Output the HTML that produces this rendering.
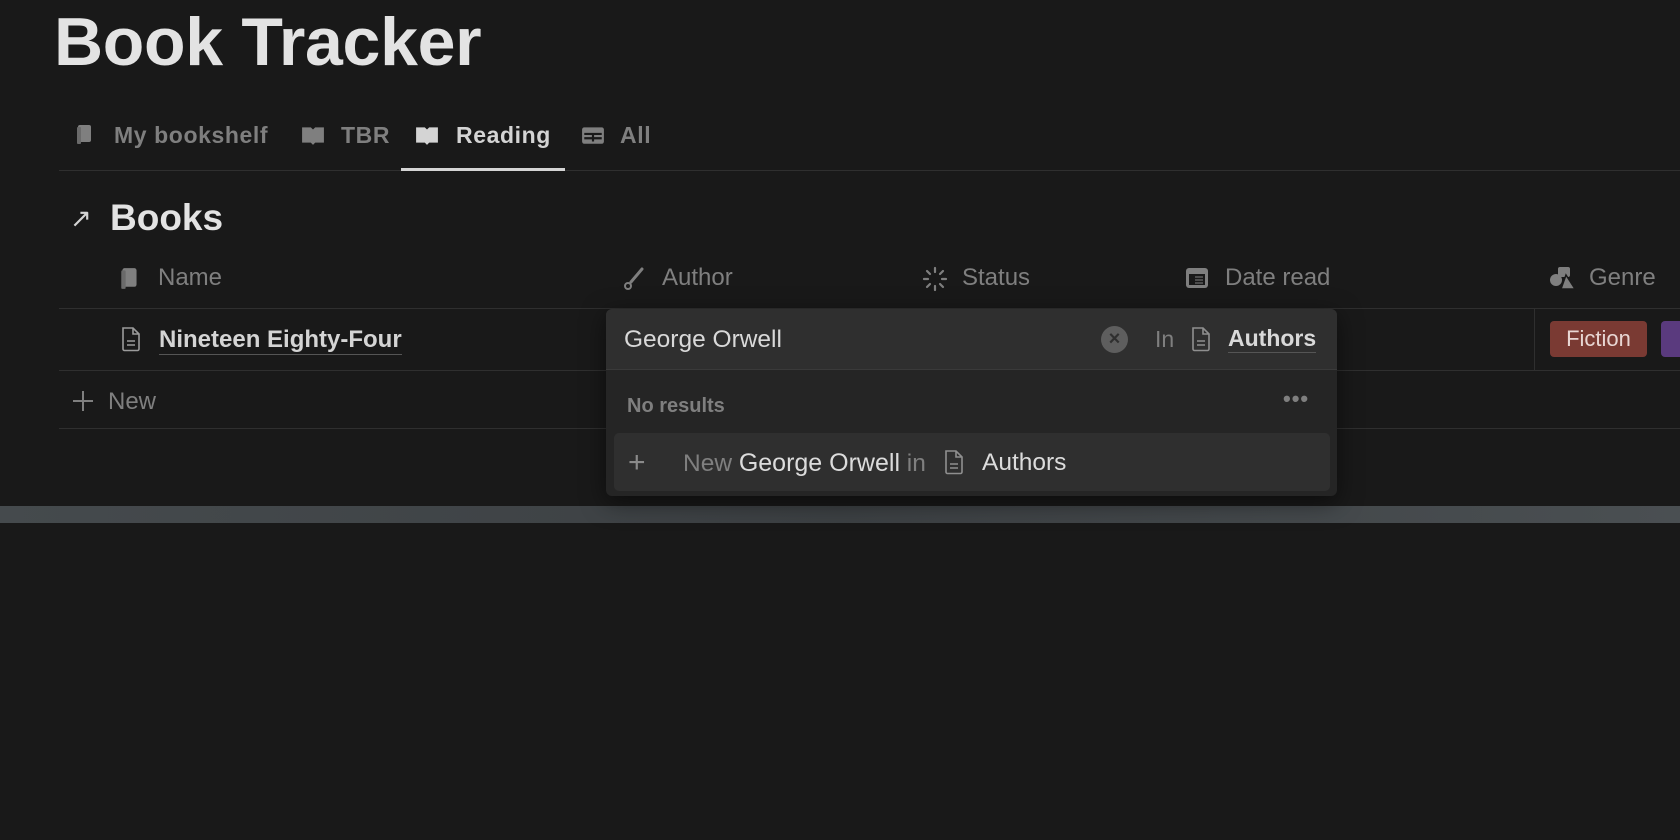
<!DOCTYPE html>
<html><head><style>
*{margin:0;padding:0;box-sizing:border-box}
body{width:1680px;height:840px;background:#191919;font-family:"Liberation Sans",sans-serif;color:#d4d4d4;position:relative;overflow:hidden}
.a{position:absolute;white-space:nowrap}
.m{color:#7f7f7f}
svg{display:block}
</style></head><body>
<div class="a" style="left:54px;top:8px;font-size:68px;line-height:1;font-weight:bold;color:#e3e3e3;letter-spacing:-0.3px">Book Tracker</div>

<div class="a m" style="left:0;top:122px;font-size:23px;font-weight:bold;width:800px;height:30px;letter-spacing:0.6px">
 <svg class="a" style="left:75px;top:0" width="20" height="24" viewBox="0 0 20 22"><rect x="3" y="2" width="13" height="17" rx="2" fill="#7f7f7f"/><rect x="2" y="4" width="4" height="17" rx="1" fill="#6a6a6a"/></svg>
 <span class="a" style="left:114px;top:0">My bookshelf</span>
 <svg class="a" style="left:301px;top:2px" width="24" height="22" viewBox="0 0 22 20"><path d="M1 3h8l2 2v14l-2-2H1z M21 3h-8l-2 2v14l2-2h8z" fill="#7f7f7f"/></svg>
 <span class="a" style="left:341px;top:0">TBR</span>
 <svg class="a" style="left:415px;top:2px" width="24" height="22" viewBox="0 0 22 20"><path d="M1 3h8l2 2v14l-2-2H1z M21 3h-8l-2 2v14l2-2h8z" fill="#d4d4d4"/></svg>
 <span class="a" style="left:456px;top:0;color:#d4d4d4">Reading</span>
 <svg class="a" style="left:581px;top:2px" width="24" height="22" viewBox="0 0 22 20"><rect x="1" y="3" width="20" height="15" rx="2" fill="#7f7f7f"/><path d="M3 9h16M11 9v7M3 13h16" stroke="#191919" stroke-width="2"/></svg>
 <span class="a" style="left:620px;top:0">All</span>
</div>
<div class="a" style="left:59px;top:170px;width:1621px;height:1px;background:#2f2f2f"></div>
<div class="a" style="left:401px;top:168px;width:164px;height:3px;background:#d4d4d4"></div>

<div class="a" style="left:70px;top:203px;font-size:26px;color:#d4d4d4">↗</div>
<div class="a" style="left:110px;top:197px;font-size:37px;font-weight:bold;color:#e3e3e3">Books</div>

<div class="a m" style="top:264px;left:0;font-size:24px;width:1680px;height:28px">
 <svg class="a" style="left:119px;top:2px" width="22" height="24" viewBox="0 0 20 22"><rect x="3" y="2" width="13" height="17" rx="2" fill="#7f7f7f"/><rect x="2" y="4" width="4" height="17" rx="1" fill="#6a6a6a"/></svg>
 <span class="a" style="left:158px;top:0">Name</span>
 <svg class="a" style="left:622px;top:3px" width="24" height="24" viewBox="0 0 24 24"><path d="M20 2L9 15" stroke="#7f7f7f" stroke-width="3" stroke-linecap="round"/><circle cx="6" cy="19" r="3" fill="none" stroke="#7f7f7f" stroke-width="2"/></svg>
 <span class="a" style="left:662px;top:0">Author</span>
 <svg class="a" style="left:922px;top:2px" width="26" height="26" viewBox="0 0 26 26"><g stroke="#7f7f7f" stroke-width="2.2" stroke-linecap="round"><path d="M13 2v4M13 20v4M2 13h4M20 13h4M5 5l3 3M18 18l3 3M21 5l-3 3M8 18l-3 3"/></g></svg>
 <span class="a" style="left:962px;top:0">Status</span>
 <svg class="a" style="left:1185px;top:3px" width="24" height="22" viewBox="0 0 24 22"><rect x="1" y="1" width="22" height="20" rx="3" fill="#7f7f7f"/><rect x="4" y="7" width="16" height="11" fill="#191919"/><path d="M10 10h8M10 13h8M10 16h8" stroke="#7f7f7f" stroke-width="1"/></svg>
 <span class="a" style="left:1225px;top:0">Date read</span>
 <svg class="a" style="left:1549px;top:2px" width="28" height="24" viewBox="0 0 28 24"><rect x="9" y="1" width="12" height="10" rx="2" fill="#7f7f7f"/><circle cx="7" cy="14" r="6" fill="#7f7f7f"/><path d="M17 9l9 14h-14z" fill="#7f7f7f" stroke="#191919" stroke-width="1.5"/></svg>
 <span class="a" style="left:1589px;top:0">Genre</span>
</div>

<div class="a" style="left:59px;top:308px;width:1621px;height:1px;background:#2f2f2f"></div>
<div class="a" style="left:59px;top:370px;width:1621px;height:1px;background:#2f2f2f"></div>
<div class="a" style="left:59px;top:428px;width:1621px;height:1px;background:#2f2f2f"></div>
<div class="a" style="left:1534px;top:309px;width:1px;height:61px;background:#2f2f2f"></div>

<svg class="a" style="left:120px;top:326px" width="22" height="26" viewBox="0 0 22 26"><path d="M3 2h10l6 6v15a1.5 1.5 0 0 1-1.5 1.5h-13A1.5 1.5 0 0 1 3 23z M13 2v6h6 M7 15h8M7 19h8" fill="none" stroke="#9b9b9b" stroke-width="1.6"/></svg>
<div class="a" style="left:159px;top:326px;font-size:24px;font-weight:bold;color:#d4d4d4;border-bottom:1px solid #555;line-height:28px">Nineteen Eighty-Four</div>

<svg class="a" style="left:72px;top:390px" width="22" height="22" viewBox="0 0 22 22"><path d="M11 1v20M1 11h20" stroke="#7f7f7f" stroke-width="2"/></svg>
<div class="a m" style="left:108px;top:388px;font-size:24px">New</div>

<div class="a" style="left:1550px;top:321px;width:97px;height:36px;background:#7a3a33;border-radius:4px;color:#e8d6d3;font-size:22px;line-height:36px;text-align:center">Fiction</div>
<div class="a" style="left:1661px;top:321px;width:30px;height:36px;background:#5a3a7e;border-radius:4px"></div>

<div class="a" style="left:0;top:506px;width:1680px;height:17px;background:linear-gradient(90deg,#454a4d,#3c4043 50%,#4a4f52)"></div>

<div class="a" style="left:606px;top:309px;width:731px;height:187px;background:#252525;border-radius:6px;box-shadow:0 6px 24px rgba(0,0,0,.5)">
 <div class="a" style="left:0;top:0;width:731px;height:61px;background:#2f2f2f;border-radius:6px 6px 0 0;border-bottom:1px solid #3a3a3a"></div>
 <div class="a" style="left:18px;top:17px;font-size:24.5px;color:#d9d9d9">George Orwell</div>
 <div class="a" style="left:495px;top:17px;width:27px;height:27px;border-radius:50%;background:#5e5e5e;color:#2f2f2f;font-size:20px;line-height:27px;text-align:center;font-weight:bold">×</div>
 <div class="a m" style="left:549px;top:17px;font-size:23px">In</div>
 <svg class="a" style="left:584px;top:16px" width="22" height="28" viewBox="0 0 22 26"><path d="M3 2h10l6 6v15a1.5 1.5 0 0 1-1.5 1.5h-13A1.5 1.5 0 0 1 3 23z M13 2v6h6 M7 15h8M7 19h8" fill="none" stroke="#8f8f8f" stroke-width="1.6"/></svg>
 <div class="a" style="left:622px;top:16px;font-size:23px;font-weight:bold;color:#d9d9d9;border-bottom:1px solid #555;line-height:27px">Authors</div>
 <div class="a m" style="left:21px;top:86px;font-size:20px;font-weight:bold">No results</div>
 <div class="a m" style="left:677px;top:83px;font-size:22px;font-weight:bold;letter-spacing:1px;line-height:14px">•••</div>
 <div class="a" style="left:8px;top:124px;width:716px;height:58px;background:#2f2f2f;border-radius:5px"></div>
 <div class="a" style="left:22px;top:137px;font-size:30px;color:#8a8a8a;font-weight:300">+</div>
 <div class="a" style="left:77px;top:140px;font-size:24.5px;color:#7f7f7f">New <span style="color:#dcdcdc;font-size:25px">George Orwell</span> in</div>
 <svg class="a" style="left:337px;top:139px" width="22" height="28" viewBox="0 0 22 26"><path d="M3 2h10l6 6v15a1.5 1.5 0 0 1-1.5 1.5h-13A1.5 1.5 0 0 1 3 23z M13 2v6h6 M7 15h8M7 19h8" fill="none" stroke="#8f8f8f" stroke-width="1.6"/></svg>
 <div class="a" style="left:376px;top:140px;font-size:24.5px;color:#dcdcdc">Authors</div>
</div>
</body></html>
